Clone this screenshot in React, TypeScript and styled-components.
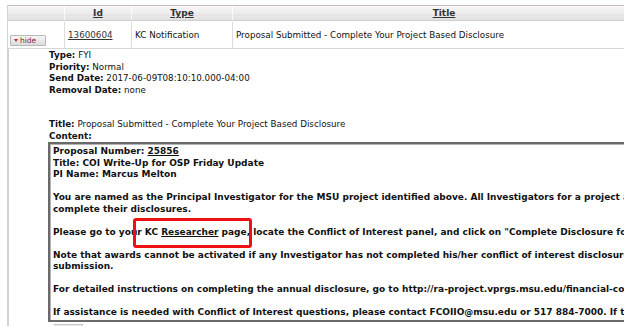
import styled, { createGlobalStyle } from "styled-components";

const GlobalStyle = createGlobalStyle`
  html, body {
    margin: 0;
    padding: 0;
    background: #fff;
    overflow: hidden;
  }
  body {
    font-family: "DejaVu Sans", Verdana, sans-serif;
    font-size: 8.75px;
    color: #111;
  }
`;

const Page = styled.div`
  width: 648px;
  padding: 5px 0 0 7px;
`;

const Row = styled.div<{ $header?: boolean }>`
  display: grid;
  grid-template-columns: 56px 67px 101px 1fr;
  height: ${(p) => (p.$header ? "14px" : "26px")};
  border-top: 1px solid ${(p) => (p.$header ? "#c9bfc0" : "transparent")};
  border-bottom: 1px solid ${(p) => (p.$header ? "#cfcfcf" : "#d6d6d6")};
  border-left: 1px solid #d4d4d4;
  background: ${(p) =>
    p.$header
      ? "linear-gradient(#f6f6f6 0%, #ececec 55%, #e6dfe3 70%, #e9e9e9 78%, #dedede 100%)"
      : "#fff"};
`;

const HeadCell = styled.div`
  display: flex;
  align-items: center;
  justify-content: center;
  border-left: 1px solid #fafafa;
  font-size: 9px;
  font-weight: bold;
  color: #333;
  text-decoration: underline;
  &:first-child {
    border-left: none;
  }
`;

const Cell = styled.div<{ $bottom?: boolean }>`
  display: flex;
  align-items: ${(p) => (p.$bottom ? "flex-end" : "center")};
  padding: ${(p) => (p.$bottom ? "0 0 2px 2px" : "0 3px")};
  border-left: 1px solid #dcdcdc;
  white-space: nowrap;
  &:first-child {
    border-left: none;
  }
`;

const IdLink = styled.span`
  color: #333;
  text-decoration: underline;
`;

const HideButton = styled.button`
  display: flex;
  align-items: center;
  gap: 2px;
  width: 36px;
  height: 11px;
  padding: 0 3px;
  border: 1px solid #b8b8b8;
  border-radius: 1px;
  background: linear-gradient(#f6f6f6, #dcdcdc);
  color: #8c1c1c;
  font-family: "DejaVu Sans", Verdana, sans-serif;
  font-size: 7.5px;
  line-height: 1;
`;

const Triangle = styled.span`
  width: 0;
  height: 0;
  border-left: 2.5px solid transparent;
  border-right: 2.5px solid transparent;
  border-top: 3px solid #c0282d;
`;

const Details = styled.div`
  border-left: 2px solid #d2d2d2;
  padding: 1px 0 0 40px;
  line-height: 11.5px;
  height: 300px;
`;

const Line = styled.div`
  white-space: nowrap;
`;

const Label = styled.b`
  font-weight: bold;
`;

const Spacer = styled.div<{ $lines: number }>`
  height: ${(p) => p.$lines * 11.5}px;
`;

const ContentBox = styled.div`
  position: relative;
  margin: 0 0 0 -1px;
  width: 640px;
  padding: 2px 0 1px 3px;
  border: 2px solid #6a6a6a;
  border-right: none;
  box-shadow: inset 1px 1px 0 #b4b4b4;
  font-size: 9px;
  font-weight: bold;
  white-space: nowrap;
`;

const Para = styled.p`
  margin: 0 0 11.5px;
  &:last-child {
    margin-bottom: 0;
  }
`;

const Underlined = styled.span`
  text-decoration: underline;
`;

const Highlight = styled.div`
  position: absolute;
  left: 83px;
  top: 74px;
  width: 113px;
  height: 24px;
  border: 3px solid #ee1111;
  border-radius: 3px;
`;

const CloseButton = styled.div`
  margin: 2px 0 0 5px;
  width: 27px;
  height: 10px;
  border: 1px solid #c8c8c8;
  background: #ececec;
`;

export default function App() {
  return (
    <>
      <GlobalStyle />
      <Page>
        <Row $header>
          <HeadCell />
          <HeadCell>Id</HeadCell>
          <HeadCell>Type</HeadCell>
          <HeadCell>Title</HeadCell>
        </Row>
        <Row>
          <Cell $bottom>
            <HideButton>
              <Triangle />
              hide
            </HideButton>
          </Cell>
          <Cell>
            <IdLink>13600604</IdLink>
          </Cell>
          <Cell>KC Notification</Cell>
          <Cell>Proposal Submitted - Complete Your Project Based Disclosure</Cell>
        </Row>
        <Details>
          <Line>
            <Label>Type:</Label> FYI
          </Line>
          <Line>
            <Label>Priority:</Label> Normal
          </Line>
          <Line>
            <Label>Send Date:</Label> 2017-06-09T08:10:10.000-04:00
          </Line>
          <Line>
            <Label>Removal Date:</Label> none
          </Line>
          <Spacer $lines={2} />
          <Line>
            <Label>Title:</Label> Proposal Submitted - Complete Your Project Based Disclosure
          </Line>
          <Line>
            <Label>Content:</Label>
          </Line>
          <ContentBox>
            <Highlight />
            <Para>
              Proposal Number: <Underlined>25856</Underlined>
              <br />
              Title: COI Write-Up for OSP Friday Update
              <br />
              PI Name: Marcus Melton
            </Para>
            <Para>
              You are named as the Principal Investigator for the MSU project identified above. All
              Investigators for a project are required to
              <br />
              complete their disclosures.
            </Para>
            <Para>
              Please go to your KC <Underlined>Researcher</Underlined> page, locate the Conflict of
              Interest panel, and click on "Complete Disclosure for Project".
            </Para>
            <Para>
              Note that awards cannot be activated if any Investigator has not completed his/her
              conflict of interest disclosure for this
              <br />
              submission.
            </Para>
            <Para>
              For detailed instructions on completing the annual disclosure, go to
              http://ra-project.vprgs.msu.edu/financial-conflict-of-interest
            </Para>
            <Para>
              If assistance is needed with Conflict of Interest questions, please contact
              FCOIIO@msu.edu or 517 884-7000. If technical assistance is needed
            </Para>
          </ContentBox>
          <CloseButton />
        </Details>
      </Page>
    </>
  );
}
